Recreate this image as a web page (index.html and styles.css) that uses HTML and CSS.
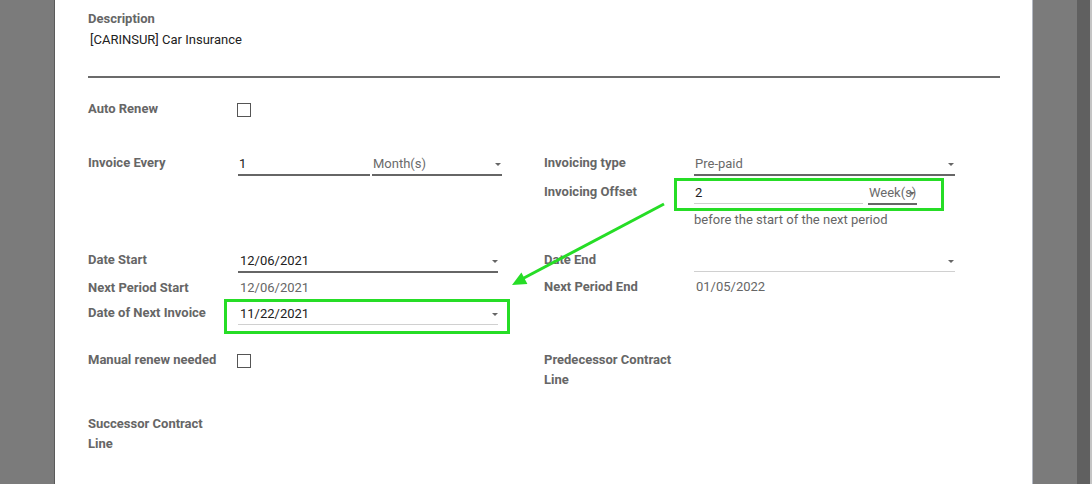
FILE: index.html
```html
<!DOCTYPE html>
<html lang="en">
<head>
<meta charset="utf-8">
<title>Contract Line</title>
<link rel="stylesheet" href="styles.css">
</head>
<body>
<div class="page">
  <div class="backdrop-left"></div>
  <main class="sheet">
    <section class="desc">
      <div class="label">Description</div>
      <div class="desc-value">[CARINSUR] Car Insurance</div>
    </section>
    <hr class="sep">
    <div class="row r-auto">
      <div class="label">Auto Renew</div>
      <div class="fieldcell"><span class="checkbox"></span></div>
    </div>

    <div class="group g-invoice">
      <div class="col">
        <div class="row r-every">
          <div class="label">Invoice Every</div>
          <div class="fieldcell pair">
            <div class="input strong w-num">1</div>
            <div class="select strong muted w-unit">Month(s)</div>
          </div>
        </div>
      </div>
      <div class="col">
        <div class="row r-type">
          <div class="label">Invoicing type</div>
          <div class="fieldcell">
            <div class="select strong muted w-wide">Pre-paid</div>
          </div>
        </div>
        <div class="row r-offset">
          <div class="label">Invoicing Offset</div>
          <div class="fieldcell pair offset">
            <div class="input light w-offset">2</div>
            <div class="select strong muted w-week">Week(s)</div>
          </div>
        </div>
        <div class="row r-note">
          <div></div>
          <div class="note">before the start of the next period</div>
        </div>
      </div>
    </div>

    <div class="group g-dates">
      <div class="col">
        <div class="row r-start">
          <div class="label">Date Start</div>
          <div class="fieldcell">
            <div class="select strong w-date">12/06/2021</div>
          </div>
        </div>
        <div class="row r-next-start">
          <div class="label">Next Period Start</div>
          <div class="value">12/06/2021</div>
        </div>
        <div class="row r-next-invoice">
          <div class="label">Date of Next Invoice</div>
          <div class="fieldcell">
            <div class="select light w-date">11/22/2021</div>
          </div>
        </div>
      </div>
      <div class="col">
        <div class="row r-end">
          <div class="label">Date End</div>
          <div class="fieldcell">
            <div class="select light w-wide"></div>
          </div>
        </div>
        <div class="row r-next-end">
          <div class="label">Next Period End</div>
          <div class="value">01/05/2022</div>
        </div>
      </div>
    </div>

    <div class="group g-links">
      <div class="col">
        <div class="row r-manual">
          <div class="label">Manual renew needed</div>
          <div class="fieldcell"><span class="checkbox"></span></div>
        </div>
      </div>
      <div class="col">
        <div class="row">
          <div class="label">Predecessor Contract Line</div>
          <div></div>
        </div>
      </div>
    </div>

    <div class="group g-succ">
      <div class="col">
        <div class="row">
          <div class="label">Successor Contract Line</div>
          <div></div>
        </div>
      </div>
    </div>
  </main>
  <div class="backdrop-right"></div>
  <div class="scrollbar"></div>

  <svg class="annotations" width="1092" height="484" viewBox="0 0 1092 484" aria-hidden="true">
    <rect x="675.5" y="179.5" width="267" height="30" fill="none" stroke="#26dd26" stroke-width="3"/>
    <rect x="225.5" y="300.5" width="283" height="32" fill="none" stroke="#26dd26" stroke-width="3"/>
    <line x1="664" y1="204" x2="522" y2="279" stroke="#26dd26" stroke-width="3"/>
    <polygon points="512,285 521.4,272.6 527.4,283.9" fill="#26dd26"/>
  </svg>
</div>
</body>
</html>
```

FILE: styles.css
```css
html, body {
  margin: 0;
  padding: 0;
  height: 484px;
  overflow: hidden;
}

body {
  font-family: Roboto, "Noto Sans", "Liberation Sans", sans-serif;
  font-size: 13px;
  line-height: 20px;
  color: #212529;
}

.page {
  position: relative;
  display: flex;
  height: 484px;
}

.backdrop-left {
  width: 54px;
  background: #7b7b7b;
  border-right: 1px solid #5a5a5a;
}

.sheet {
  box-sizing: content-box;
  width: 912px;
  padding: 9px 32px 0 33px;
  background: #fff;
  border-right: 1px solid #b3b8c2;
}

.backdrop-right {
  width: 44px;
  background: #7b7b7b;
}

.scrollbar {
  width: 13px;
  background: #606060;
  border-right: 2px solid #c4c4c4;
}

.label {
  font-weight: 700;
  color: #666;
  padding-right: 12px;
}

.desc-value {
  margin-top: 1px;
  padding-left: 2px;
  color: #212121;
}

.sep {
  margin: 26px 0 0;
  border: 0;
  height: 2px;
  background: #6b6b6b;
}

.row {
  display: grid;
  grid-template-columns: 150px 1fr;
  align-items: start;
}

.r-auto {
  margin-top: 21px;
  height: 20px;
}

.group {
  display: grid;
  grid-template-columns: 456px 456px;
}

.g-invoice { margin-top: 34px; }
.g-dates { margin-top: 20px; }
.g-links { margin-top: 25px; }
.g-succ { margin-top: 24px; }

.r-type { height: 29px; }
.r-offset { height: 28px; }
.r-start { height: 28px; }
.r-next-start { height: 25px; }
.r-end { height: 27px; }

.fieldcell {
  display: flex;
  align-items: flex-start;
}

.pair { gap: 2px; }
.pair.offset { gap: 5px; }

.input,
.select {
  position: relative;
  box-sizing: border-box;
  padding: 1px 0 0 1px;
  height: 22px;
  white-space: nowrap;
  color: #212121;
}

.strong {
  height: 23px;
  border-bottom: 2px solid #666;
}

.light {
  border-bottom: 1px solid #d0d0d0;
}

.muted { color: #6a6a6a; }

.select::after {
  content: "";
  position: absolute;
  right: 1px;
  top: 10px;
  border-left: 3px solid transparent;
  border-right: 3px solid transparent;
  border-top: 3px solid #666;
}

.w-num { width: 132px; }
.w-unit { width: 130px; }
.w-wide { width: 261px; }
.w-offset { width: 169px; }
.w-week { width: 49px; }
.w-date { width: 260px; padding-left: 2px; }

.w-week::after { right: 2px; }
.w-date::after { right: 0; }

.value {
  color: #666;
  padding-left: 2px;
}

.note {
  color: #666;
}

.checkbox {
  display: block;
  box-sizing: border-box;
  width: 14px;
  height: 14px;
  margin: 4px 0 0 -1px;
  border: 1px solid #555;
  background: #fff;
}

.annotations {
  position: absolute;
  left: 0;
  top: 0;
  pointer-events: none;
}
```
